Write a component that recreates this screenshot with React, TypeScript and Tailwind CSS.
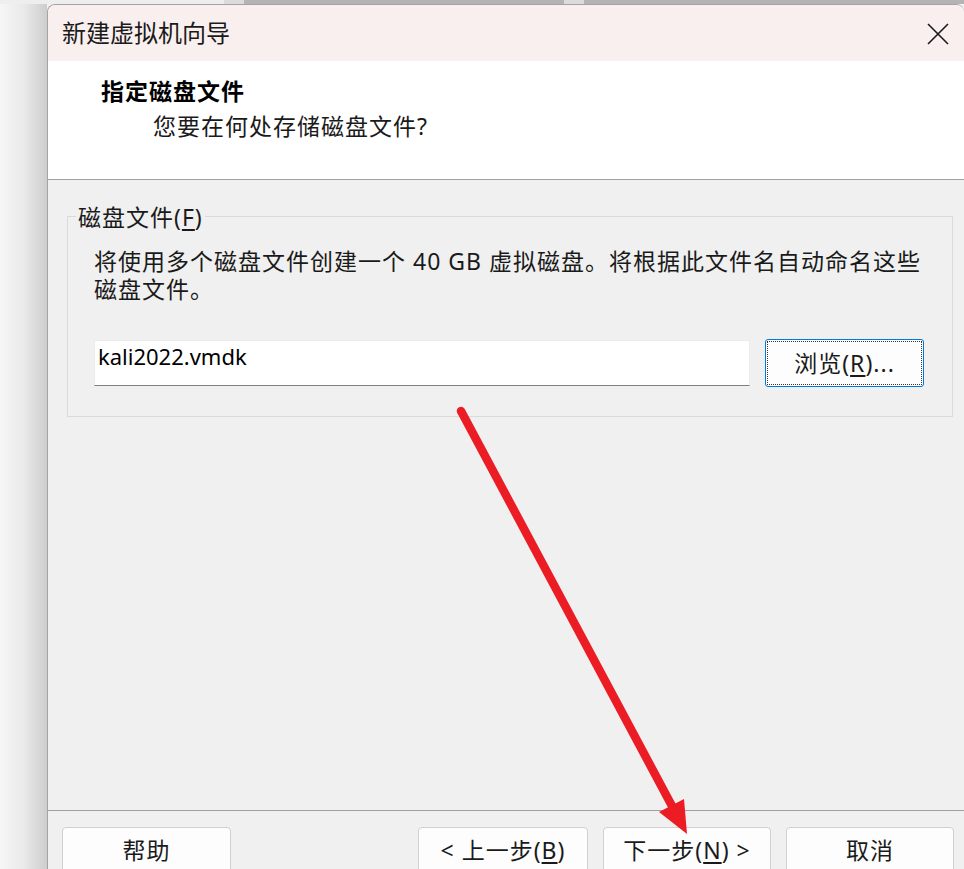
import React from "react";

const cjk = { fontFamily: '"Noto Sans", "Noto Sans CJK SC", sans-serif' };

function WizardButton({ children, className = "" }: { children: React.ReactNode; className?: string }) {
  return (
    <button
      className={`h-[46px] rounded-[4px] border border-[#d0d0d0] bg-[#fdfdfd] text-[23px] text-[#1a1a1a] leading-none tracking-[1px] flex items-center justify-center ${className}`}
    >
      {children}
    </button>
  );
}

export default function App() {
  return (
    <div className="relative w-[964px] h-[869px] overflow-hidden bg-[#f3f3f3] flex flex-col" style={cjk}>
      {/* desktop strip above the window */}
      <div className="h-[4px] flex shrink-0">
        <div className="w-[224px] bg-[#eeeeee]" />
        <div className="w-[20px] bg-[#dcdcdc]" />
        <div className="w-[320px] bg-[#b4b4b4]" />
        <div className="w-[20px] bg-[#dcdcdc]" />
        <div className="flex-1 bg-[#b4b4b4]" />
      </div>

      <div className="flex flex-1 min-h-0">
        <div className="w-[47px] shrink-0 bg-gradient-to-r from-[#f6f6f6] via-[#eaeaea] to-[#cdcdcd]" />

        <div className="flex-1 flex flex-col rounded-t-[8px] border-l border-t border-[#a3a3a3] bg-[#f0f0f0] overflow-hidden">
          {/* title bar */}
          <div className="h-[56px] shrink-0 bg-[#f9efee] flex items-center justify-between pl-[14px] pr-[15px]">
            <span className="text-[24px] text-[#1a1a1a] leading-none">新建虚拟机向导</span>
            <svg width="22" height="22" viewBox="0 0 22 22" className="mt-[2px]">
              <path d="M1 1 L21 21 M21 1 L1 21" stroke="#1a1a1a" strokeWidth="1.6" />
            </svg>
          </div>

          {/* header */}
          <div className="h-[119px] shrink-0 bg-white border-b border-[#a0a0a0] pt-[16px] pl-[53px]">
            <div className="text-[23px] font-bold text-black leading-[28px] tracking-[1px]">指定磁盘文件</div>
            <div className="text-[23px] text-[#1a1a1a] leading-[28px] mt-[7px] pl-[52px] tracking-[1px]">您要在何处存储磁盘文件?</div>
          </div>

          {/* body */}
          <div className="flex-1 pt-[36px] pl-[19px] pr-[11px]">
            <div className="relative border border-[#dadada] h-[201px] pt-[20px] pl-[26px] pr-[26px]">
              <div className="absolute -top-[14px] left-[8px] px-[2px] bg-[#f0f0f0] text-[23px] leading-[28px] text-[#1a1a1a] tracking-[1px]">
                磁盘文件(<span className="underline underline-offset-[3px]">F</span>)
              </div>
              <p className="text-[23px] leading-[28px] text-[#1a1a1a] tracking-[1px] pt-[10px]">
                将使用多个磁盘文件创建一个 40 GB 虚拟磁盘。将根据此文件名自动命名这些磁盘文件。
              </p>
              <div className="flex items-center mt-[36px] gap-[15px]">
                <div className="w-[656px] h-[46px] bg-white border border-[#ececec] border-b-[#808080] pl-[3px] pt-[1px] text-[22px] leading-[28px] text-black">
                  kali2022.vmdk
                </div>
                <div className="w-[159px] h-[48px] rounded-[3px] border border-[#0078d7] bg-[#fdfdfd] p-[1px]">
                  <div className="w-full h-full border border-dotted border-[#333] flex items-center justify-center text-[23px] text-[#1a1a1a] leading-none tracking-[1px]">
                    浏览(<span className="underline underline-offset-[3px]">R</span>)...
                  </div>
                </div>
              </div>
            </div>
          </div>

          {/* footer */}
          <div className="h-[59px] shrink-0 border-t border-[#a0a0a0] flex items-start pt-[16px] pl-[14px]">
            <WizardButton className="w-[169px]">帮助</WizardButton>
            <WizardButton className="w-[170px] ml-[187px]">
              &lt;&nbsp;上一步(<span className="underline underline-offset-[3px]">B</span>)
            </WizardButton>
            <WizardButton className="w-[168px] ml-[15px]">
              下一步(<span className="underline underline-offset-[3px]">N</span>)&nbsp;&gt;
            </WizardButton>
            <WizardButton className="w-[168px] ml-[15px]">取消</WizardButton>
          </div>
        </div>
      </div>

      {/* red annotation arrow */}
      <svg className="absolute inset-0 pointer-events-none" width="964" height="869" viewBox="0 0 964 869">
        <line x1="461" y1="411" x2="672" y2="806" stroke="#ec1c24" strokeWidth="8.5" strokeLinecap="round" />
        <polygon points="687,834 659,812 684,799" fill="#ec1c24" />
      </svg>
    </div>
  );
}
